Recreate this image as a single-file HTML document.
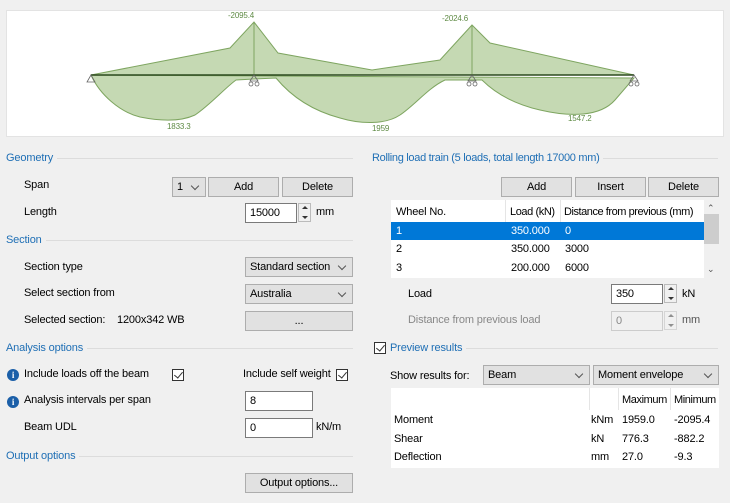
<!DOCTYPE html>
<html><head><meta charset="utf-8"><style>
body{margin:0;width:730px;height:503px;background:#f0f0f0;font-family:"Liberation Sans",sans-serif;font-size:11px;letter-spacing:-0.15px;color:#000;position:relative;overflow:hidden}
.a{position:absolute;white-space:nowrap}
.h{position:absolute;color:#1f6fb5;font-size:11px;display:flex;align-items:center;white-space:nowrap}
.h:after{content:"";flex:1;height:1px;background:#dcdcdc;margin-left:4px}
.btn{position:absolute;background:#e1e1e1;border:1px solid #adadad;box-sizing:border-box;text-align:center;line-height:18px}
.cb{position:absolute;background:#e1e1e1;border:1px solid #adadad;box-sizing:border-box;padding-left:4px;line-height:18px}
.cb:after{content:"";position:absolute;right:7px;top:5px;width:5px;height:5px;border-right:1px solid #555;border-bottom:1px solid #555;transform:rotate(45deg)}
.tb{position:absolute;background:#fff;border:1px solid #7a7a7a;box-sizing:border-box;padding-left:4px;line-height:18px}
.chk{position:absolute;width:12px;height:12px;border:1px solid #333;box-sizing:border-box;background:#fff}
.chk:after{content:"";position:absolute;left:3px;top:0px;width:4px;height:7px;border-right:1px solid #333;border-bottom:1px solid #333;transform:rotate(40deg)}
.info{position:absolute;width:12px;height:12px;border-radius:50%;background:#1b5fa8;color:#fff;font-size:9px;font-weight:bold;text-align:center;line-height:12px;font-family:"Liberation Serif",serif}
.spin{position:absolute;width:13px;height:19px;border:1px solid #bbb;box-sizing:border-box;background:#f0f0f0}
.spin:before{content:"";position:absolute;left:3px;top:2px;border:3px solid transparent;border-bottom:3px solid #333;border-top:0}
.spin:after{content:"";position:absolute;left:3px;bottom:2px;border:3px solid transparent;border-top:3px solid #333;border-bottom:0}
</style></head><body>
<div class="a" style="left:6px;top:10px;width:718px;height:127px;background:#fff;border:1px solid #e3e3e3;box-sizing:border-box"></div>
<svg class="a" style="left:0;top:0" width="730" height="140">
<path d="M91,75 L230,48 L254,22 L278,53 L372,70 L440,60 L472,25 L490,43 L634,75 Z" fill="#c5d9b3" stroke="#7ea560" stroke-width="1"/>
<path d="M91,75 C100,95 120,112 140,117 C160,121 180,122 195,115 C210,105 225,88 236,80 L254,79 L276,78 C290,95 310,110 340,118 C360,124 385,125 400,115 C415,105 428,88 445,80 L482,80 C492,90 510,103 540,110 C570,117 600,117 615,100 L634,78 Z" fill="#c5d9b3" stroke="#7ea560" stroke-width="1"/>
<line x1="254" y1="22" x2="254" y2="75" stroke="#7ea560"/><line x1="472" y1="25" x2="472" y2="75" stroke="#7ea560"/>
<line x1="91" y1="75" x2="634" y2="75" stroke="#2d4a1f" stroke-width="1.5"/>
<g fill="none" stroke="#666" stroke-width="0.8">
<path d="M91,75 L87,82 L95,82 Z"/><path d="M254,75 L250,81 L258,81 Z"/><circle cx="251" cy="84" r="2"/><circle cx="257" cy="84" r="2"/>
<path d="M472,75 L468,81 L476,81 Z"/><circle cx="469" cy="84" r="2"/><circle cx="475" cy="84" r="2"/>
<path d="M634,75 L630,81 L638,81 Z"/><circle cx="631" cy="84" r="2"/><circle cx="637" cy="84" r="2"/>
</g>
<g fill="#5e8a44" font-family="Liberation Sans" font-size="8">
<text x="228" y="18">-2095.4</text><text x="442" y="21">-2024.6</text>
<text x="167" y="129">1833.3</text><text x="372" y="131">1959</text><text x="568" y="121">1547.2</text></g>
</svg>
<!-- left -->
<div class="h" style="left:6px;top:152px;width:347px">Geometry</div>
<div class="a" style="left:24px;top:179px">Span</div>
<div class="cb" style="left:172px;top:177px;width:34px;height:20px">1</div>
<div class="btn" style="left:208px;top:177px;width:71px;height:20px">Add</div>
<div class="btn" style="left:282px;top:177px;width:71px;height:20px">Delete</div>
<div class="a" style="left:24px;top:206px">Length</div>
<div class="tb" style="left:245px;top:203px;width:52px;height:20px">15000</div><div class="spin" style="left:298px;top:203px"></div>
<div class="a" style="left:316px;top:206px">mm</div>
<div class="h" style="left:6px;top:234px;width:347px">Section</div>
<div class="a" style="left:24px;top:261px">Section type</div>
<div class="cb" style="left:245px;top:257px;width:108px;height:20px">Standard section</div>
<div class="a" style="left:24px;top:287px">Select section from</div>
<div class="cb" style="left:245px;top:284px;width:108px;height:20px">Australia</div>
<div class="a" style="left:24px;top:314px">Selected section:</div><div class="a" style="left:117px;top:314px">1200x342 WB</div>
<div class="btn" style="left:245px;top:311px;width:108px;height:20px">...</div>
<div class="h" style="left:6px;top:342px;width:347px">Analysis options</div>
<div class="info" style="left:7px;top:369px">i</div>
<div class="a" style="left:24px;top:368px">Include loads off the beam</div>
<div class="chk" style="left:172px;top:369px"></div>
<div class="a" style="left:243px;top:368px">Include self weight</div>
<div class="chk" style="left:336px;top:369px"></div>
<div class="info" style="left:7px;top:396px">i</div>
<div class="a" style="left:24px;top:394px">Analysis intervals per span</div>
<div class="tb" style="left:245px;top:391px;width:68px;height:20px">8</div>
<div class="a" style="left:24px;top:421px">Beam UDL</div>
<div class="tb" style="left:245px;top:418px;width:68px;height:20px">0</div>
<div class="a" style="left:316px;top:421px">kN/m</div>
<div class="h" style="left:6px;top:450px;width:347px">Output options</div>
<div class="btn" style="left:245px;top:473px;width:108px;height:20px">Output options...</div>
<!-- right -->
<div class="h" style="left:372px;top:152px;width:346px;letter-spacing:-0.3px">Rolling load train (5 loads, total length 17000 mm)</div>
<div class="btn" style="left:501px;top:177px;width:71px;height:20px">Add</div>
<div class="btn" style="left:575px;top:177px;width:71px;height:20px">Insert</div>
<div class="btn" style="left:648px;top:177px;width:71px;height:20px">Delete</div>
<div class="a" style="left:391px;top:200px;width:313px;height:78px;background:#fff"></div>
<div class="a" style="left:704px;top:200px;width:15px;height:78px;background:#f0f0f0"></div>
<div class="a" style="left:704px;top:214px;width:15px;height:30px;background:#cdcdcd"></div>
<div class="a" style="left:707px;top:203px;font-size:9px;color:#555">&#8963;</div>
<div class="a" style="left:707px;top:264px;font-size:9px;color:#555">&#8964;</div>
<div class="a" style="left:505px;top:200px;width:1px;height:22px;background:#e5e5e5"></div>
<div class="a" style="left:560px;top:200px;width:1px;height:22px;background:#e5e5e5"></div>
<div class="a" style="left:396px;top:206px">Wheel No.</div><div class="a" style="left:510px;top:206px;letter-spacing:-0.4px">Load (kN)</div><div class="a" style="left:564px;top:206px;letter-spacing:-0.45px">Distance from previous (mm)</div>
<div class="a" style="left:391px;top:222px;width:313px;height:18px;background:#0078d7"></div>
<div class="a" style="left:396px;top:225px;color:#fff">1</div><div class="a" style="left:511px;top:225px;color:#fff">350.000</div><div class="a" style="left:565px;top:225px;color:#fff">0</div>
<div class="a" style="left:396px;top:243px">2</div><div class="a" style="left:511px;top:243px">350.000</div><div class="a" style="left:565px;top:243px">3000</div>
<div class="a" style="left:396px;top:262px">3</div><div class="a" style="left:511px;top:262px">200.000</div><div class="a" style="left:565px;top:262px">6000</div>
<div class="a" style="left:408px;top:288px">Load</div>
<div class="tb" style="left:611px;top:284px;width:52px;height:20px">350</div><div class="spin" style="left:664px;top:284px"></div>
<div class="a" style="left:682px;top:288px">kN</div>
<div class="a" style="left:408px;top:314px;color:#888">Distance from previous load</div>
<div class="tb" style="left:611px;top:311px;width:52px;height:20px;background:#f0f0f0;border-color:#ccc;color:#888">0</div><div class="spin" style="left:664px;top:311px;opacity:.5"></div>
<div class="a" style="left:682px;top:314px;color:#555">mm</div>
<div class="chk" style="left:374px;top:342px"></div>
<div class="h" style="left:390px;top:342px;width:328px">Preview results</div>
<div class="a" style="left:390px;top:370px">Show results for:</div>
<div class="cb" style="left:483px;top:365px;width:107px;height:20px">Beam</div>
<div class="cb" style="left:593px;top:365px;width:126px;height:20px">Moment envelope</div>
<div class="a" style="left:391px;top:388px;width:328px;height:80px;background:#fff"></div>
<div class="a" style="left:589px;top:388px;width:1px;height:22px;background:#e5e5e5"></div>
<div class="a" style="left:618px;top:388px;width:1px;height:22px;background:#e5e5e5"></div>
<div class="a" style="left:670px;top:388px;width:1px;height:22px;background:#e5e5e5"></div>
<div class="a" style="left:622px;top:394px;letter-spacing:-0.4px">Maximum</div><div class="a" style="left:674px;top:394px;letter-spacing:-0.4px">Minimum</div>
<div class="a" style="left:394px;top:414px">Moment</div><div class="a" style="left:591px;top:414px">kNm</div><div class="a" style="left:622px;top:414px">1959.0</div><div class="a" style="left:674px;top:414px">-2095.4</div>
<div class="a" style="left:394px;top:433px">Shear</div><div class="a" style="left:591px;top:433px">kN</div><div class="a" style="left:622px;top:433px">776.3</div><div class="a" style="left:674px;top:433px">-882.2</div>
<div class="a" style="left:394px;top:451px">Deflection</div><div class="a" style="left:591px;top:451px">mm</div><div class="a" style="left:622px;top:451px">27.0</div><div class="a" style="left:674px;top:451px">-9.3</div>
</body></html>
